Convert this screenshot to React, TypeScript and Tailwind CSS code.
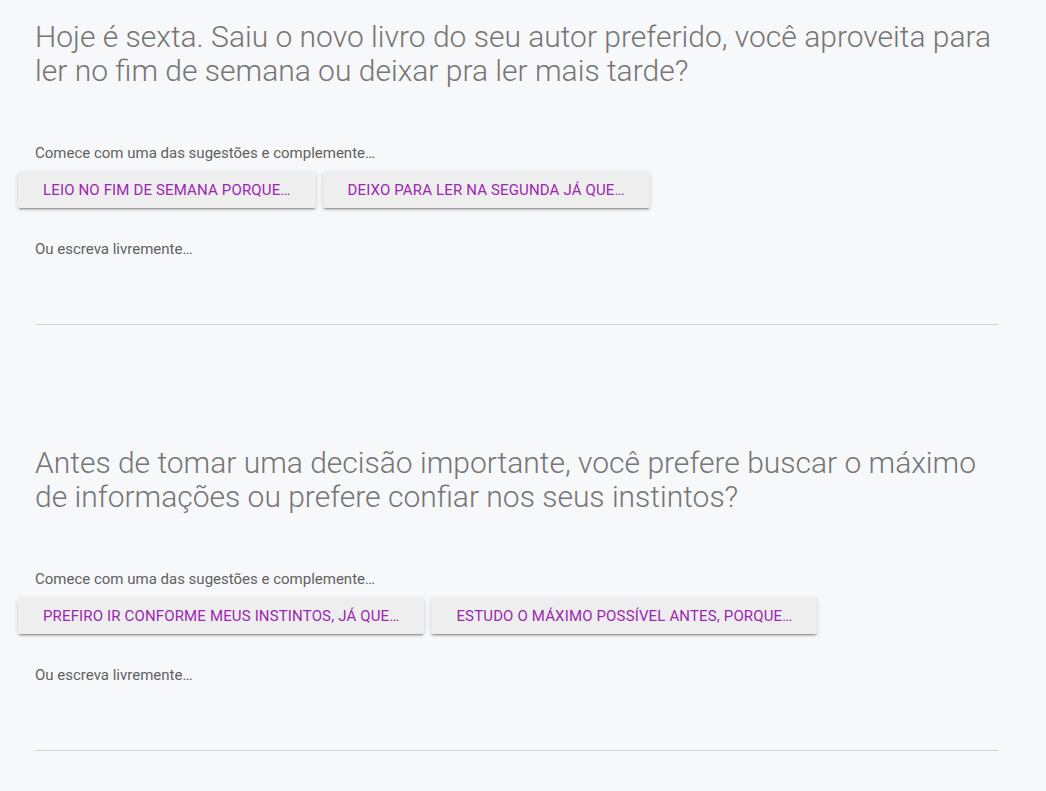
import React from "react";

type Q = { title: string; options: string[] };

const questions: Q[] = [
  {
    title:
      "Hoje é sexta. Saiu o novo livro do seu autor preferido, você aproveita para ler no fim de semana ou deixar pra ler mais tarde?",
    options: ["Leio no fim de semana porque…", "Deixo para ler na segunda já que…"],
  },
  {
    title:
      "Antes de tomar uma decisão importante, você prefere buscar o máximo de informações ou prefere confiar nos seus instintos?",
    options: ["Prefiro ir conforme meus instintos, já que…", "Estudo o máximo possível antes, porque…"],
  },
];

function Section({ q }: { q: Q }) {
  return (
    <section className="mb-[121px]">
      <h2 className="text-[30px] leading-[34px] font-light text-[#757575]">{q.title}</h2>
      <p className="mt-[55px] text-[15px] leading-[20px] text-[#616161]">
        Comece com uma das sugestões e complemente…
      </p>
      <div className="mt-[9px] -ml-[17px] flex gap-[7px]">
        {q.options.map((o) => (
          <button
            key={o}
            className="h-[36px] px-[25px] rounded-[2px] bg-[#eeeeee] text-[15px] tracking-[0.15px] uppercase text-[#9c27b0] shadow-[0_2px_2px_0_rgba(0,0,0,0.14),0_3px_1px_-2px_rgba(0,0,0,0.2),0_1px_5px_0_rgba(0,0,0,0.12)]"
          >
            {o}
          </button>
        ))}
      </div>
      <p className="mt-[31px] text-[15px] leading-[20px] text-[#616161]">Ou escreva livremente…</p>
      <div className="h-[66px] border-b border-[#d2d2d2]" />
    </section>
  );
}

export default function App() {
  return (
    <div className="min-h-screen bg-[#f7f8fa] pl-[35px] pr-[48px] pt-[20px] font-['Roboto',sans-serif]">
      {questions.map((q) => (
        <Section key={q.title} q={q} />
      ))}
    </div>
  );
}
